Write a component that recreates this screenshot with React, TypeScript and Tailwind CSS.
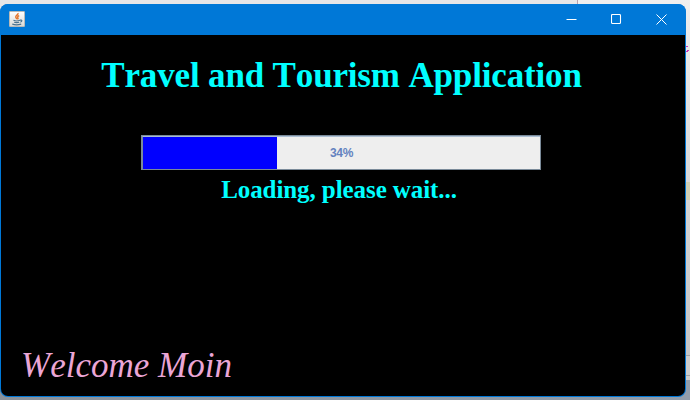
const progress = 34;

function JavaIcon() {
  return (
    <svg className="mb-px" width="16" height="16" viewBox="0 0 16 16" fill="none">
      <defs>
        <linearGradient id="tile" x1="0" y1="0" x2="0" y2="1">
          <stop offset="0" stopColor="#ffffff" />
          <stop offset="1" stopColor="#d9d9d6" />
        </linearGradient>
      </defs>
      <rect x="0.5" y="0.5" width="15" height="15" rx="0.5" fill="url(#tile)" stroke="#b9bab8" />
      <path d="M9 2c.8 1.700-3 2.600-2.200 4.400.3.700 1.200 1.200 1.100 2M10.200 4.600c-1.400.6-2.100 1.200-1.300 2.200.4.600.2 1.100-.3 1.500" stroke="#e5752c" strokeWidth="1.400" />
      <path d="M4.500 9.300c1.500.7 5 .6 6.500 0M5.200 11.200c1.400.5 3.600.5 5 0M11 9.200c2.200-.6 2.600 1.300.3 2.100M3.300 13.200c2.400.7 6.500.6 8.900-.1" stroke="#4b7390" strokeWidth="1.200" />
    </svg>
  );
}

function WindowButton({ children }: { children: React.ReactNode }) {
  return (
    <button className="flex h-[31px] w-[45px] items-center justify-center">
      <svg width="11" height="11" viewBox="0 0 11 11" fill="none" stroke="white">{children}</svg>
    </button>
  );
}

function TitleBar() {
  return (
    <header className="flex h-[31px] items-center justify-between bg-[#0078d7] pl-[9px] pr-[2px]">
      <JavaIcon />
      <div className="flex">
        <WindowButton><path d="M0.500 5.500h10" /></WindowButton>
        <WindowButton><rect x="0.500" y="0.500" width="9" height="9" rx="1" strokeWidth="1.100" /></WindowButton>
        <WindowButton><path d="M0.500 0.500l10 10M10.500 0.500l-10 10" /></WindowButton>
      </div>
    </header>
  );
}

function ProgressBar() {
  return (
    <div className="relative mx-auto mt-[39px] h-[35px] w-[400px] border border-[#7a8a99] bg-[#eeeeee]">
      <div className="h-full border-l border-t border-l-[#7a8a99] border-t-[#a9bdd2]">
        <div className="h-full bg-[#0000ff]" style={{ width: `${(progress * 134) / 135}%` }} />
      </div>
      <span className="absolute inset-0 flex items-center justify-center pl-px text-[12px] font-bold tracking-[-0.4px] text-[#6382bf]">
        {progress}%
      </span>
    </div>
  );
}

export default function App() {
  return (
    <div className="relative h-[400px] w-[690px] overflow-hidden bg-[#e7e6e7] pt-1">
      <div className="absolute left-[577px] top-0 h-1 w-[113px] border-l border-[#b99fac] bg-[#efefef]" />
      <div className="absolute right-0 top-0 flex h-full w-3 flex-col">
        <div className="h-[182px] bg-gradient-to-b from-[#efefef] to-[#d8d8d8]" />
        <div className="h-[18px] bg-[#d0cfb4]" />
        <div className="h-[155px] bg-gradient-to-b from-[#d4d4d4] to-[#c5c5c5]" />
        <div className="h-[21px] border-y border-[#a2a2a2] bg-[#cccccc]" />
        <div className="h-[4px] bg-[#cccccc]" />
      </div>
      <div className="absolute right-0 top-[46px] h-[8px] w-1">
        <div className="h-px w-[2px] bg-[#c935b8]" />
        <div className="ml-px mt-[3px] h-px w-[2px] bg-[#c935b8]" />
        <div className="h-px w-[2px] bg-[#c935b8]" />
      </div>
      <div className="absolute bottom-0 left-0 h-5 w-full bg-gradient-to-r from-[#8b9199] to-[#929daa]" />
      <main className="relative h-[393px] w-[686px] overflow-hidden rounded-[8px] bg-[#0078d7] font-['Liberation_Sans',sans-serif]">
        <TitleBar />
        <section className="mx-px flex h-[361px] flex-col rounded-b-[7px] bg-black font-['Liberation_Serif',serif] text-[#00ffff] [font-kerning:none]">
          <h1 className="mt-5 whitespace-nowrap pr-[3px] text-center text-[35px] font-bold leading-[41px] tracking-[-0.16px]">
            Travel and Tourism Application
          </h1>
          <div className="pr-1 font-['Liberation_Sans',sans-serif]"><ProgressBar /></div>
          <p className="mt-[6px] whitespace-nowrap pr-[8px] text-center text-[25px] font-bold leading-[28px] tracking-[-0.08px]">
            Loading, please wait...
          </p>
          <p className="mt-auto mb-[10px] whitespace-nowrap pl-5 text-[35px] italic leading-[41px] text-[#eba6d6]">
            Welcome Moin
          </p>
        </section>
      </main>
    </div>
  );
}
